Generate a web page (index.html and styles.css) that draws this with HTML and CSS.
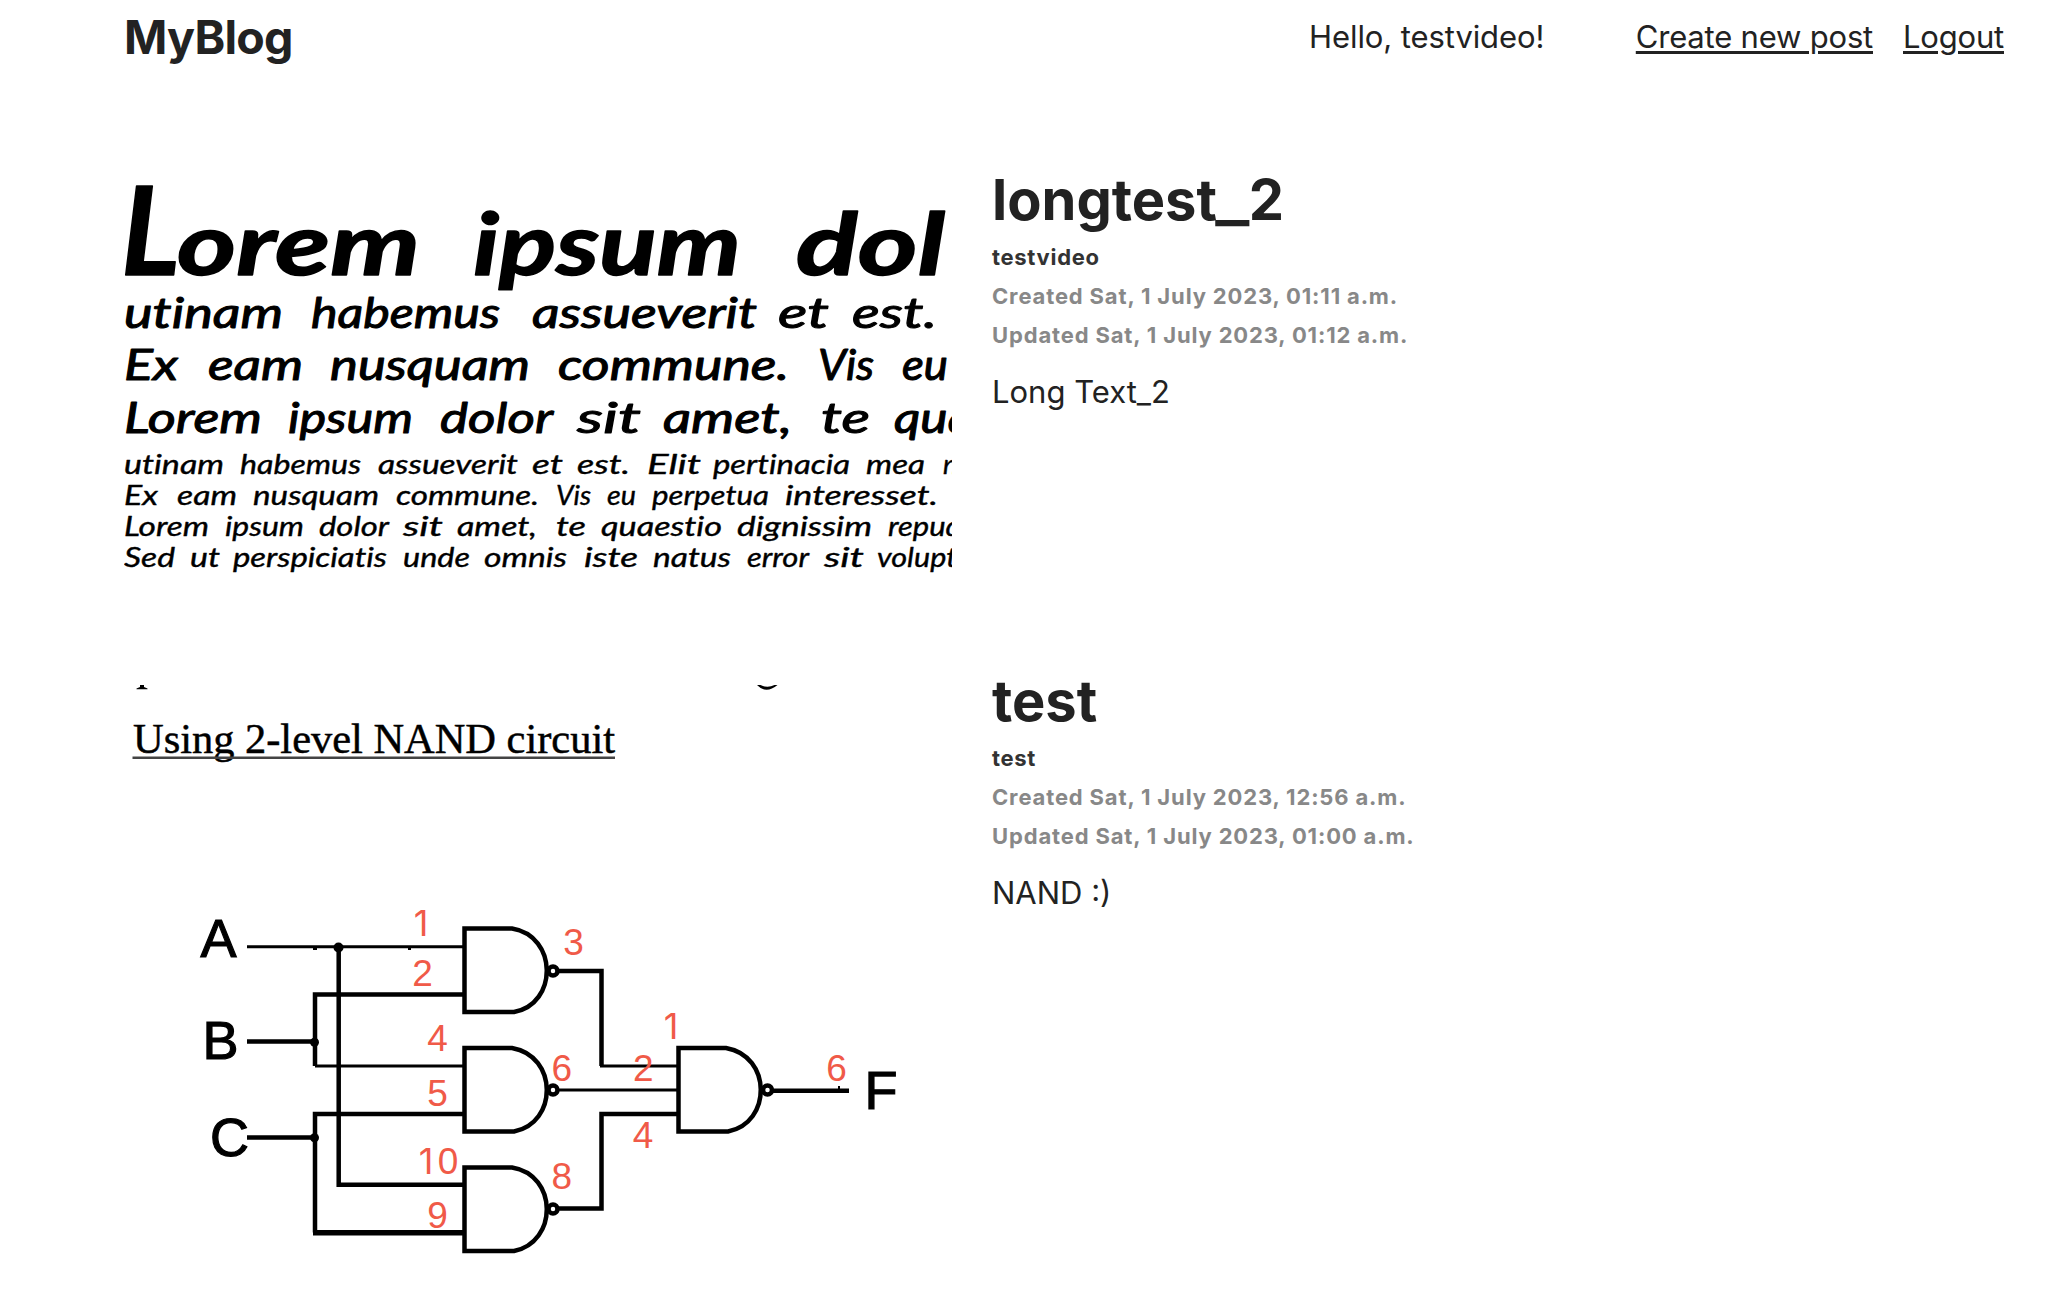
FILE: index.html
```html
<!DOCTYPE html>
<html lang="en">
<head>
<meta charset="utf-8">
<title>MyBlog</title>
<link rel="stylesheet" href="styles.css">
</head>
<body>
<header class="header">
  <a class="logo">MyBlog</a>
  <nav class="nav">
    <span class="greeting">Hello, testvideo!</span>
    <a class="link create">Create new post</a>
    <a class="link logout">Logout</a>
  </nav>
</header>
<main class="posts">
  <article class="post">
    <svg class="cover" viewBox="124 184 828 461">
      <g class="hand big">
        <text class="tall" x="121" y="275">L</text>
        <text x="177" y="275" textLength="243" lengthAdjust="spacingAndGlyphs">orem</text>
        <text x="473" y="275" textLength="268" lengthAdjust="spacingAndGlyphs">ipsum</text>
        <text x="796" y="275" textLength="149" lengthAdjust="spacingAndGlyphs">dol</text>
      </g>
      <g class="hand mid">
        <text x="124" y="328" textLength="159" lengthAdjust="spacingAndGlyphs">utinam</text>
        <text x="311" y="328" textLength="189" lengthAdjust="spacingAndGlyphs">habemus</text>
        <text x="532" y="328" textLength="225" lengthAdjust="spacingAndGlyphs">assueverit</text>
        <text x="778" y="328" textLength="51" lengthAdjust="spacingAndGlyphs">et</text>
        <text x="852" y="328" textLength="85" lengthAdjust="spacingAndGlyphs">est.</text>
        <text x="124" y="380" textLength="54" lengthAdjust="spacingAndGlyphs">Ex</text>
        <text x="208" y="380" textLength="95" lengthAdjust="spacingAndGlyphs">eam</text>
        <text x="330" y="380" textLength="200" lengthAdjust="spacingAndGlyphs">nusquam</text>
        <text x="558" y="380" textLength="231" lengthAdjust="spacingAndGlyphs">commune.</text>
        <text x="818" y="380" textLength="56" lengthAdjust="spacingAndGlyphs">Vis</text>
        <text x="902" y="380" textLength="46" lengthAdjust="spacingAndGlyphs">eu</text>
        <text x="124" y="433" textLength="138" lengthAdjust="spacingAndGlyphs">Lorem</text>
        <text x="288" y="433" textLength="125" lengthAdjust="spacingAndGlyphs">ipsum</text>
        <text x="440" y="433" textLength="113" lengthAdjust="spacingAndGlyphs">dolor</text>
        <text x="577" y="433" textLength="64" lengthAdjust="spacingAndGlyphs">sit</text>
        <text x="663" y="433" textLength="129" lengthAdjust="spacingAndGlyphs">amet,</text>
        <text x="821" y="433" textLength="49" lengthAdjust="spacingAndGlyphs">te</text>
        <text x="894" y="433" textLength="80" lengthAdjust="spacingAndGlyphs">qua</text>
      </g>
      <g class="hand small">
        <text x="124" y="474" textLength="100" lengthAdjust="spacingAndGlyphs">utinam</text>
        <text x="240" y="474" textLength="121" lengthAdjust="spacingAndGlyphs">habemus</text>
        <text x="378" y="474" textLength="140" lengthAdjust="spacingAndGlyphs">assueverit</text>
        <text x="532" y="474" textLength="31" lengthAdjust="spacingAndGlyphs">et</text>
        <text x="577" y="474" textLength="53" lengthAdjust="spacingAndGlyphs">est.</text>
        <text x="647" y="474" textLength="54" lengthAdjust="spacingAndGlyphs">Elit</text>
        <text x="713" y="474" textLength="137" lengthAdjust="spacingAndGlyphs">pertinacia</text>
        <text x="866" y="474" textLength="59" lengthAdjust="spacingAndGlyphs">mea</text>
        <text x="943" y="474">n</text>
        <text x="124" y="505" textLength="34" lengthAdjust="spacingAndGlyphs">Ex</text>
        <text x="177" y="505" textLength="60" lengthAdjust="spacingAndGlyphs">eam</text>
        <text x="253" y="505" textLength="126" lengthAdjust="spacingAndGlyphs">nusquam</text>
        <text x="396" y="505" textLength="143" lengthAdjust="spacingAndGlyphs">commune.</text>
        <text x="556" y="505" textLength="35" lengthAdjust="spacingAndGlyphs">Vis</text>
        <text x="607" y="505" textLength="29" lengthAdjust="spacingAndGlyphs">eu</text>
        <text x="652" y="505" textLength="117" lengthAdjust="spacingAndGlyphs">perpetua</text>
        <text x="785" y="505" textLength="153" lengthAdjust="spacingAndGlyphs">interesset.</text>
        <text x="124" y="536" textLength="85" lengthAdjust="spacingAndGlyphs">Lorem</text>
        <text x="225" y="536" textLength="79" lengthAdjust="spacingAndGlyphs">ipsum</text>
        <text x="319" y="536" textLength="70" lengthAdjust="spacingAndGlyphs">dolor</text>
        <text x="403" y="536" textLength="40" lengthAdjust="spacingAndGlyphs">sit</text>
        <text x="457" y="536" textLength="80" lengthAdjust="spacingAndGlyphs">amet,</text>
        <text x="556" y="536" textLength="30" lengthAdjust="spacingAndGlyphs">te</text>
        <text x="601" y="536" textLength="121" lengthAdjust="spacingAndGlyphs">quaestio</text>
        <text x="737" y="536" textLength="135" lengthAdjust="spacingAndGlyphs">dignissim</text>
        <text x="888" y="536" textLength="74" lengthAdjust="spacingAndGlyphs">repud</text>
        <text x="124" y="567" textLength="51" lengthAdjust="spacingAndGlyphs">Sed</text>
        <text x="190" y="567" textLength="30" lengthAdjust="spacingAndGlyphs">ut</text>
        <text x="233" y="567" textLength="154" lengthAdjust="spacingAndGlyphs">perspiciatis</text>
        <text x="403" y="567" textLength="67" lengthAdjust="spacingAndGlyphs">unde</text>
        <text x="484" y="567" textLength="83" lengthAdjust="spacingAndGlyphs">omnis</text>
        <text x="584" y="567" textLength="54" lengthAdjust="spacingAndGlyphs">iste</text>
        <text x="653" y="567" textLength="78" lengthAdjust="spacingAndGlyphs">natus</text>
        <text x="747" y="567" textLength="62" lengthAdjust="spacingAndGlyphs">error</text>
        <text x="824" y="567" textLength="40" lengthAdjust="spacingAndGlyphs">sit</text>
        <text x="877" y="567" textLength="80" lengthAdjust="spacingAndGlyphs">volupt</text>
      </g>
    </svg>
    <div class="body">
      <h2 class="title">longtest<span class="underscore">_</span>2</h2>
      <p class="author">testvideo</p>
      <p class="date">Created Sat, 1 July 2023, 01:11 a.m.</p>
      <p class="date">Updated Sat, 1 July 2023, 01:12 a.m.</p>
      <p class="text">Long Text_2</p>
    </div>
  </article>
  <article class="post">
    <svg class="cover tallcover" viewBox="124 685 828 605">
      <path d="M140 685h4v2l3.500 1.500v.7h-11v-.7l3.500-1.500z"/>
      <path d="M757 685q9 9.500 20.500 0h-3q-7 3.500-14 0z"/>
      <text class="heading" x="133" y="752.800" textLength="482" lengthAdjust="spacingAndGlyphs">Using 2-level NAND circuit</text>
      <path d="M132.500 757.700H615" stroke="#444" stroke-width="2.500"/>
      <g class="wire">
        <path d="M247 1041.500H315M463 994.500H315V1066M247 1137.500H315M463 1114H315V1232.500M338.700 947V1184.700H463"/>
        <path d="M559 971H601.500V1066M559 1208.500H601.500V1114H678M773 1090.700H849"/>
        <path class="heavy" d="M313 1232.700H463"/>
        <path class="thin" d="M247 946.700H463M315 1066H463M600 1066H678M559 1090H678"/>
        <path d="M512 928.500H464.500V1012H514C558 1004 558 936 512 928.500Z"/>
        <path d="M512 1048H464.500V1131.500H514C558 1123 558 1056 512 1048Z"/>
        <path d="M512 1167.500H464.500V1251H514C558 1242 558 1175 512 1167.500Z"/>
        <path d="M726 1048H678.500V1131.500H728C772 1123 772 1056 726 1048Z"/>
        <circle cx="553" cy="971" r="4.500"/>
        <circle cx="553" cy="1090" r="4.500"/>
        <circle cx="553" cy="1209" r="4.500"/>
        <circle cx="767.500" cy="1090" r="4.500"/>
      </g>
      <circle cx="338.500" cy="947.500" r="5"/>
      <circle cx="314.500" cy="1042.300" r="4.500"/>
      <circle cx="314.500" cy="1137.700" r="4.500"/>
      <path d="M313 946h4v4h-4zM408 946h3v4h-3zM838 1086h2v4h-2z"/>
      <g class="term">
        <text x="218.500" y="956.700">A</text>
        <text x="220.500" y="1059">B</text>
        <text x="229.500" y="1156">C</text>
        <text x="881" y="1109">F</text>
      </g>
      <g class="pin">
        <text class="one" x="421" y="936">1</text>
        <text x="422.500" y="986">2</text>
        <text x="573.500" y="955">3</text>
        <text x="437.500" y="1051">4</text>
        <text x="561.700" y="1081">6</text>
        <text x="437.500" y="1105.500">5</text>
        <text class="one" x="426" y="1173.500">1</text>
        <text x="448" y="1173.500">0</text>
        <text x="437.500" y="1227.500">9</text>
        <text x="561.700" y="1188.500">8</text>
        <text class="one" x="671" y="1039">1</text>
        <text x="643.300" y="1080.500">2</text>
        <text x="643" y="1148">4</text>
        <text x="836.500" y="1081">6</text>
      </g>
    </svg>
    <div class="body">
      <h2 class="title">test</h2>
      <p class="author">test</p>
      <p class="date">Created Sat, 1 July 2023, 12:56 a.m.</p>
      <p class="date">Updated Sat, 1 July 2023, 01:00 a.m.</p>
      <p class="text">NAND :)</p>
    </div>
  </article>
</main>
</body>
</html>
```
FILE: styles.css
```css
* { box-sizing: border-box; margin: 0; padding: 0; }
body {
  height: 1290px;
  overflow: hidden;
  background: #fff;
  color: #222;
  font: 32px/48px Inter, sans-serif;
}
.header {
  display: flex;
  justify-content: space-between;
  align-items: center;
  height: 74px;
  padding: 0 54px 0 124px;
}
.logo { font-size: 46.500px; font-weight: 700; letter-spacing: -.75px; }
.nav { display: flex; font-size: 31px; letter-spacing: -.2px; }
.greeting { margin-right: 91.500px; letter-spacing: -.1px; }
.create { margin-right: 30px; }
.link { text-decoration: underline; text-decoration-thickness: 3px; text-underline-offset: 3px; }
.posts { display: flex; flex-direction: column; gap: 40px; padding: 110px 0 0 124px; }
.post { display: grid; grid-template-columns: 828px 1fr; column-gap: 40px; }
.cover { display: block; width: 828px; height: 461px; overflow: hidden; }
.tallcover { height: 605px; }
.title { height: 56px; margin-top: -12px; font-size: 56px; line-height: 56px; font-weight: 700; }
.underscore { display: inline-block; margin: 0 2.500px; transform: scaleX(1.28); }
.author, .date { font-size: 22px; line-height: 39px; font-weight: 700; letter-spacing: .85px; }
.author { margin-top: 10px; color: #333; letter-spacing: .7px; }
.date { color: #888; }
.text { margin-top: 13px; font-size: 31px; }
.hand { font-family: Lato, sans-serif; font-style: italic; font-variant-ligatures: none; stroke: #000; stroke-linejoin: round; }
.big { font-size: 86px; font-weight: 700; stroke-width: 1.500px; }
.big .tall { font-size: 122px; }
.mid { font-size: 42px; font-weight: 400; stroke-width: 1px; }
.small { font-size: 27.500px; font-weight: 400; stroke-width: .4px; }
.heading { font: 43px "Liberation Serif", serif; stroke: #000; stroke-width: .5px; }
.wire { fill: none; stroke: #000; stroke-width: 4.500px; }
.wire .thin { stroke-width: 3px; }
.wire .heavy { stroke-width: 5.500px; }
.term { font: 54px "Liberation Sans", sans-serif; text-anchor: middle; stroke: #000; stroke-width: 1.200px; }
.pin { font: 37px "Liberation Sans", sans-serif; text-anchor: middle; fill: #f05a48; }
.pin .one { font-family: Inter, sans-serif; font-size: 36px; }
```
